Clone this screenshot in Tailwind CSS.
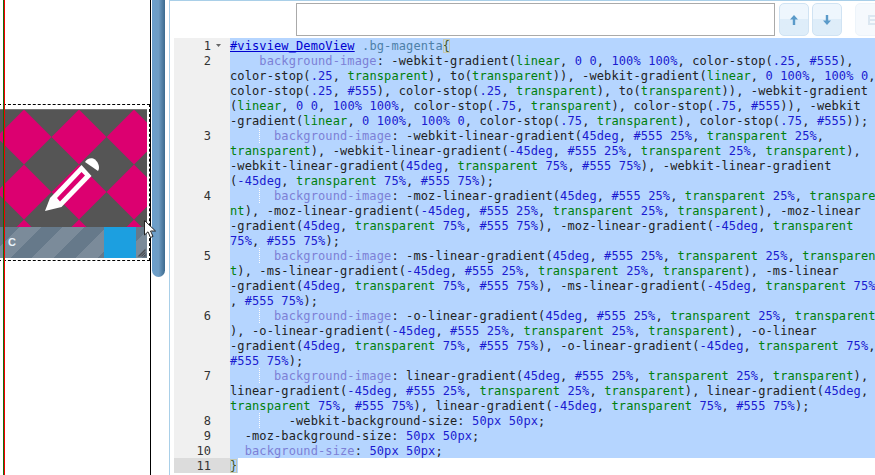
<!DOCTYPE html>
<html lang="en">
  <head>
    <meta charset="UTF-8" />
    <title>Style editor</title>
    <script src="https://cdn.jsdelivr.net/npm/@tailwindcss/browser@4"></script>
  </head>
  <body class="bg-white">
    <div class="relative flex w-[875px] h-[475px] overflow-hidden bg-white">
      <!-- canvas pane -->
      <div class="relative w-[151px] h-full border-r border-black">
        <div class="w-[152px] mt-[104px] -ml-[2px] pl-[1px] border border-dashed border-black pt-[4px] pb-[2px]">
          <div class="w-[147px] h-[149px] flex flex-col bg-[#555] border-t border-[#777]">
            <svg width="147" height="117" viewBox="0 110 147 117" class="block">
              <rect x="0" y="109" width="147" height="118" fill="#555" />
              <g fill="#dc0070">
                <polygon points="24,109.5 51.5,137 24,164.5 -3.5,137" />
                <polygon points="79,109.5 106.5,137 79,164.5 51.5,137" />
                <polygon points="134,109.5 161.5,137 134,164.5 106.5,137" />
                <polygon points="24,164.5 51.5,192 24,219.5 -3.5,192" />
                <polygon points="79,164.5 106.5,192 79,219.5 51.5,192" />
                <polygon points="134,164.5 161.5,192 134,219.5 106.5,192" />
                <polygon points="24,219.5 51.5,247 -3.5,247" />
                <polygon points="79,219.5 106.5,247 51.5,247" />
                <polygon points="134,219.5 161.5,247 106.5,247" />
              </g>
              <path d="M45 211 L50 198 L81.5 165 L91.5 176 L61.5 207 Z" fill="#fff" />
              <path d="M57 198 L81.5 172 L85 175.5 L60 201.5 Z" fill="#dc0070" />
              <path d="M85 162 C87 158 92 157 95 159.5 C99 163 100 168 98 171 Z" fill="#fff" />
            </svg>
            <div class="relative flex flex-1 items-center bg-[repeating-linear-gradient(135deg,#66798a_0,#66798a_13.5px,#7b8b9a_13.5px,#7b8b9a_29px,#66798a_29px,#66798a_31px)]">
              <span class="ml-[8px] text-[11px] font-bold leading-none text-[#e8f2fa] [font-family:'Liberation_Sans',sans-serif]">C</span>
              <div class="absolute left-[104px] top-0 bottom-0 w-[32px] bg-[#1c9fe0]"></div>
              <svg width="9" height="9" viewBox="0 0 9 9" class="absolute right-[1px] bottom-[1px]">
                <path d="M8.5 .5V8.5H.5Z" fill="#4a4f55" />
                <path d="M3 8.5 8.5 3M5.5 8.5 8.5 5.5" stroke="#8a97a3" stroke-width=".7" />
              </svg>
            </div>
          </div>
        </div>
        <div class="absolute left-[4px] top-0 bottom-0 w-px bg-[#f00000]"></div>
        <div class="absolute left-[3px] top-0 bottom-0 w-px bg-[#0f6e0f]"></div>
      </div>

      <!-- scrollbar -->
      <div class="w-[18px] h-full pl-px">
        <div class="w-[13px] h-[277px] rounded-b-[7px] bg-linear-to-r from-[#6b9fcb] via-[#6f9dc4] to-[#3b6a8e]"></div>
      </div>

      <!-- editor pane -->
      <div class="flex-1 min-w-0 h-full border-l border-t border-[#a9cfe8]">
        <div class="flex h-[37px] items-start pt-[2px] pl-[126px]">
          <div class="shrink-0 w-[479px] h-[33px] border border-[#aaa] bg-white"></div>
          <button class="shrink-0 ml-[4px] w-[30px] h-[33px] flex items-center justify-center rounded-[5px] border border-[#d0e3f3] bg-linear-to-b from-[#eef6fd] from-50% to-[#deedf9] to-50%">
            <svg width="10" height="12" viewBox="0 0 10 12"><path d="M5 1 9 5.5H6.2V11H3.8V5.5H1Z" fill="#5a9ac9" /></svg>
          </button>
          <button class="shrink-0 ml-[3px] w-[30px] h-[33px] flex items-center justify-center rounded-[5px] border border-[#d0e3f3] bg-linear-to-b from-[#eef6fd] from-50% to-[#deedf9] to-50%">
            <svg width="10" height="12" viewBox="0 0 10 12"><path d="M5 11 1 6.5H3.8V1H6.2V6.5H9Z" fill="#5a9ac9" /></svg>
          </button>
          <button class="shrink-0 ml-[13px] w-[30px] h-[33px] flex items-center pl-[11px] rounded-[5px] border border-[#edf4fa] bg-[#f5f9fd]">
            <svg width="12" height="12" viewBox="0 0 12 12"><path d="M1 1H11V11H1ZM3 5H9V3H3ZM3 9H9V7H3Z" fill="#dbe7f1" fill-rule="evenodd" /></svg>
          </button>
        </div>
        <div id="editor" class="ml-[4px] text-[12px] tracking-[0.11px] leading-[17px] [font-family:'DejaVu_Sans_Mono',monospace] whitespace-pre"></div>
      </div>

      <!-- mouse pointer -->
      <svg width="14" height="20" viewBox="0 0 14 20" class="absolute left-[144px] top-[220px]">
        <path d="M.5 .5V15L4 11.8 6.5 17.5 9 16.4 6.6 11H11.5Z" fill="#fff" stroke="#222" stroke-width="1" />
      </svg>
    </div>

    <script>
      const source = [
        ["#visview_DemoView .bg-magenta{"],
        [
          "    background-image: -webkit-gradient(linear, 0 0, 100% 100%, color-stop(.25, #555),",
          "color-stop(.25, transparent), to(transparent)), -webkit-gradient(linear, 0 100%, 100% 0,",
          "color-stop(.25, #555), color-stop(.25, transparent), to(transparent)), -webkit-gradient",
          "(linear, 0 0, 100% 100%, color-stop(.75, transparent), color-stop(.75, #555)), -webkit",
          "-gradient(linear, 0 100%, 100% 0, color-stop(.75, transparent), color-stop(.75, #555));",
        ],
        [
          "      background-image: -webkit-linear-gradient(45deg, #555 25%, transparent 25%,",
          "transparent), -webkit-linear-gradient(-45deg, #555 25%, transparent 25%, transparent),",
          "-webkit-linear-gradient(45deg, transparent 75%, #555 75%), -webkit-linear-gradient",
          "(-45deg, transparent 75%, #555 75%);",
        ],
        [
          "      background-image: -moz-linear-gradient(45deg, #555 25%, transparent 25%, transpare",
          "nt), -moz-linear-gradient(-45deg, #555 25%, transparent 25%, transparent), -moz-linear",
          "-gradient(45deg, transparent 75%, #555 75%), -moz-linear-gradient(-45deg, transparent",
          "75%, #555 75%);",
        ],
        [
          "      background-image: -ms-linear-gradient(45deg, #555 25%, transparent 25%, transparen",
          "t), -ms-linear-gradient(-45deg, #555 25%, transparent 25%, transparent), -ms-linear",
          "-gradient(45deg, transparent 75%, #555 75%), -ms-linear-gradient(-45deg, transparent 75%",
          ", #555 75%);",
        ],
        [
          "      background-image: -o-linear-gradient(45deg, #555 25%, transparent 25%, transparent",
          "), -o-linear-gradient(-45deg, #555 25%, transparent 25%, transparent), -o-linear",
          "-gradient(45deg, transparent 75%, #555 75%), -o-linear-gradient(-45deg, transparent 75%,",
          "#555 75%);",
        ],
        [
          "      background-image: linear-gradient(45deg, #555 25%, transparent 25%, transparent),",
          "linear-gradient(-45deg, #555 25%, transparent 25%, transparent), linear-gradient(45deg,",
          "transparent 75%, #555 75%), linear-gradient(-45deg, transparent 75%, #555 75%);",
        ],
        ["        -webkit-background-size: 50px 50px;"],
        ["  -moz-background-size: 50px 50px;"],
        ["  background-size: 50px 50px;"],
        ["}"],
      ];

      // rough css colouring, good enough for this one snippet
      const tokens =
        /(#visview_DemoView)|(\.bg-magenta)|((?<![-\w])background-(?:image|size)(?=:))|((?<![-\w])(?:transparent|transparen|transpare|linear)(?![-\w])|^nt(?=\))|^t(?=\)))|(#555|(?<![\w-])-?(?:\d+|\.\d+)(?:deg|%|px)?)|([{}])/g;
      const tokenClass = [
        "text-[#0000d0]",
        "text-[#4d80a8]",
        "text-[#7c80d6]",
        "text-[#00800a]",
        "text-[#1a1ad0]",
        "text-[#4a5a20] outline outline-[#c4c8b0] -outline-offset-1",
      ];

      const paint = (text) =>
        text.replace(tokens, (match, ...groups) => {
          const idx = groups.slice(0, 6).findIndex((g) => g !== undefined);
          const underline = idx === 0 ? " underline" : "";
          return `<span class="${tokenClass[idx]}${underline}">${match}</span>`;
        });

      const editor = document.getElementById("editor");
      let html = "";
      source.forEach((rows, n) => {
        const last = n === source.length - 1;
        rows.forEach((row, i) => {
          const guide =
            n >= 2 && n <= 7 && i === 0
              ? '<i class="absolute left-[29px] top-0 h-[15px] border-l border-dotted border-white"></i>'
              : "";
          html += `<div class="flex h-[15px]">
            <div class="w-[56px] shrink-0 flex ${last ? "bg-[#dcdcdc]" : "bg-[#f0f0f0]"} text-[#333] tracking-normal">
              <span class="w-[37px] text-right">${i === 0 ? n + 1 : ""}</span>
              ${n === 0 ? '<svg width="7" height="15" viewBox="0 0 7 15" class="ml-[4px]"><path d="M1 6H6L3.5 9Z" fill="#666"/></svg>' : ""}
            </div>
            <div class="relative text-[#222] ${last ? "w-[8px] bg-[#b5d5ff]" : "flex-1 bg-[#b5d5ff]"}">${guide}${paint(row)}</div>
          </div>`;
        });
      });
      editor.innerHTML = html;
    </script>
  </body>
</html>
